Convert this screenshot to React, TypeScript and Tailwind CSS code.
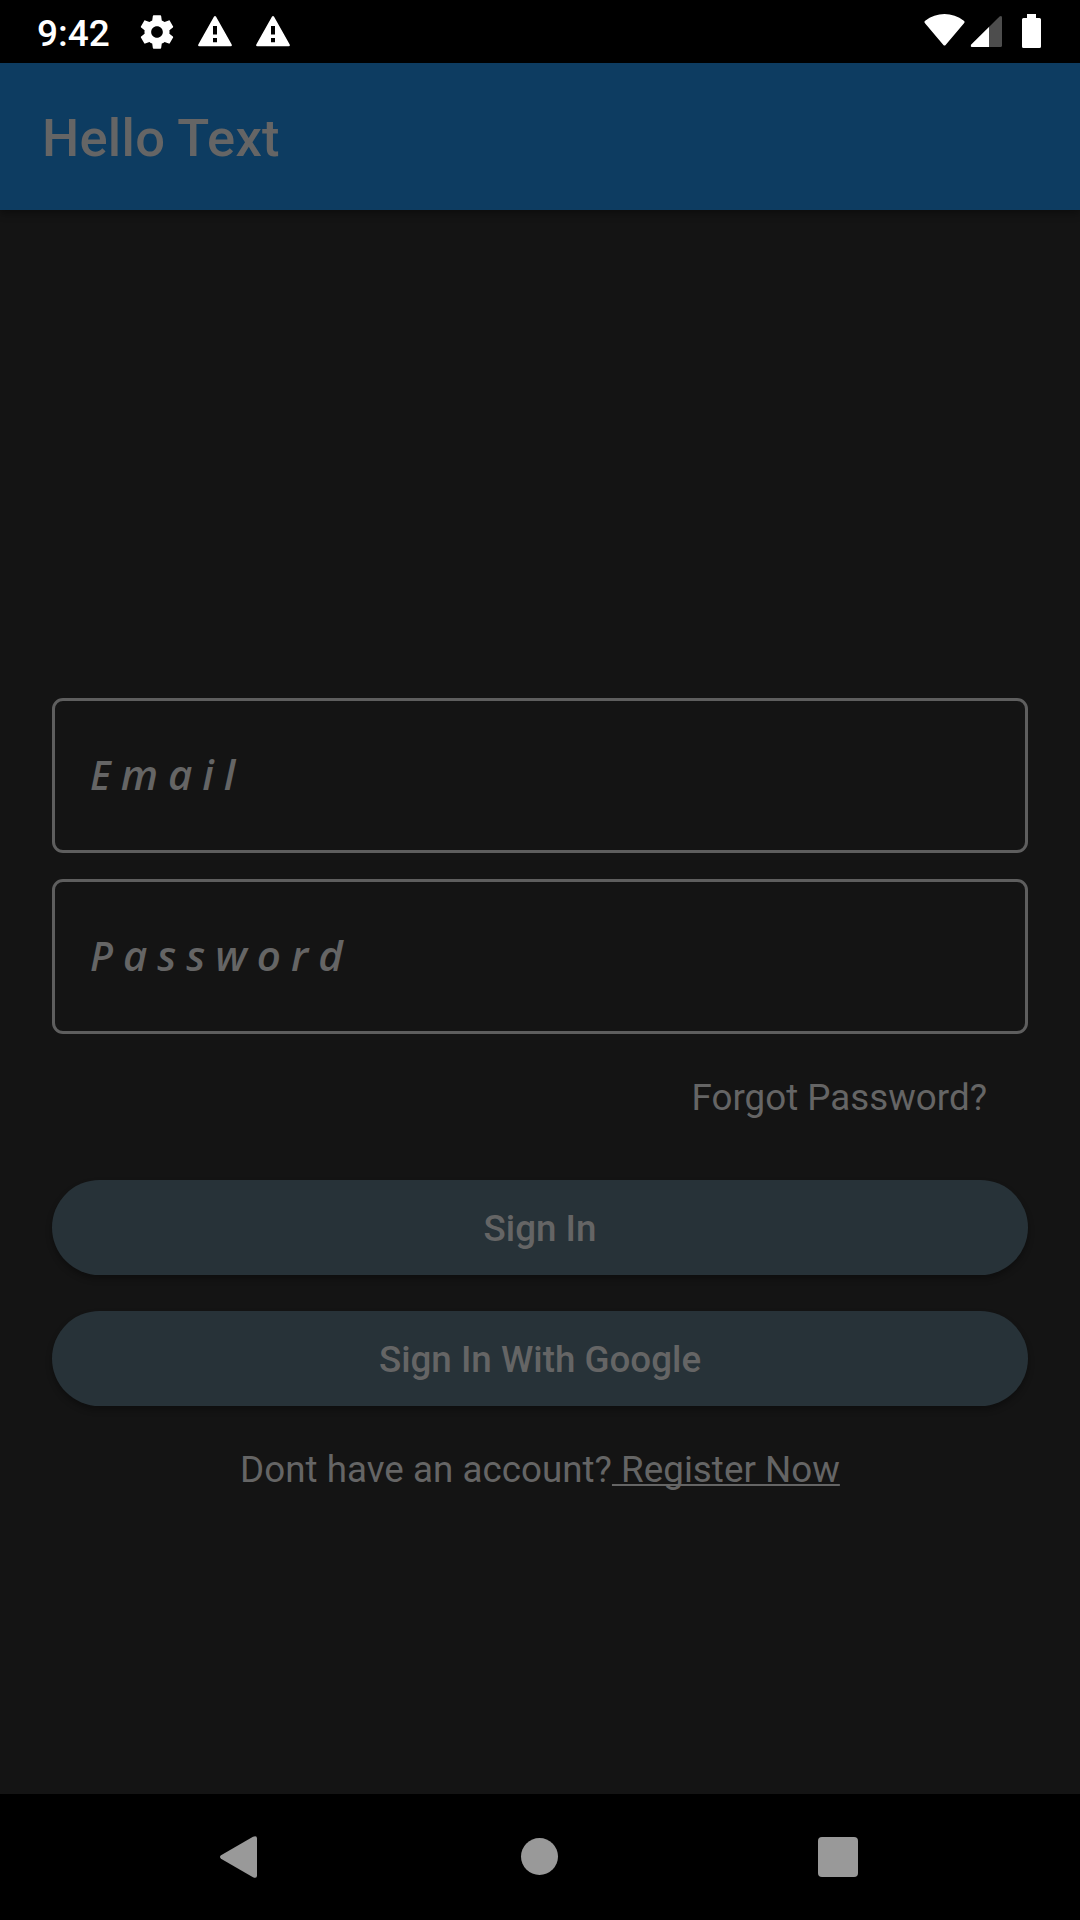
import React from "react";

function StatusBar() {
  return (
    <div className="flex h-[63px] w-full shrink-0 items-start justify-between bg-black text-white">
      <div className="flex h-full items-start">
        <span className="ml-[37px] mt-[12px] w-[100px] whitespace-nowrap text-[37px] font-medium leading-[43px]">9:42</span>
        <svg className="mt-[12px] size-[40px]" viewBox="0 0 24 24" fill="currentColor">
          <path d="M19.43 12.98c.04-.32.07-.64.07-.98s-.03-.66-.07-.98l2.11-1.65c.19-.15.24-.42.12-.64l-2-3.46c-.12-.22-.39-.3-.61-.22l-2.49 1c-.52-.4-1.08-.73-1.69-.98l-.38-2.65C14.46 2.18 14.25 2 14 2h-4c-.25 0-.46.18-.49.42l-.38 2.65c-.61.25-1.17.59-1.69.98l-2.49-1c-.23-.09-.49 0-.61.22l-2 3.46c-.13.22-.07.49.12.64l2.11 1.65c-.04.32-.07.65-.07.98s.03.66.07.98l-2.11 1.65c-.19.15-.24.42-.12.64l2 3.46c.12.22.39.3.61.22l2.49-1c.52.4 1.08.73 1.69.98l.38 2.65c.03.24.24.42.49.42h4c.25 0 .46-.18.49-.42l.38-2.65c.61-.25 1.17-.59 1.69-.98l2.49 1c.23.09.49 0 .61-.22l2-3.46c.12-.22.07-.49-.12-.64l-2.11-1.65zM12 15.5c-1.93 0-3.5-1.57-3.5-3.5s1.57-3.5 3.5-3.5 3.5 1.57 3.5 3.5-1.57 3.5-3.5 3.5z" />
        </svg>
        <Warning className="ml-[20px] mt-[15px] h-[32px] w-[36px]" />
        <Warning className="ml-[22px] mt-[15px] h-[32px] w-[36px]" />
      </div>
      <svg className="mr-[36px] mt-[12px] h-[38px] w-[120px]" viewBox="0 0 120 38">
        <path d="M1.200 11.500Q-.3 9.800 1.200 8.700C12.500-.1 28.500-.1 39.800 8.700Q41.300 9.800 39.800 11.500L21.600 33Q20.500 34.200 19.400 33Z" fill="#fff" />
        <path d="M47.300 32.600 75.300 4.700Q78 2.700 78 5.700V33.500Q78 35 76.500 35H48Q46 35 47.300 32.600Z" fill="#4d4d4d" />
        <path d="M47.300 32.600 65 15V35H48Q46 35 47.300 32.600Z" fill="#fff" />
        <path d="M103 2h9v4h3.500q1.500 0 1.500 1.500v27q0 1.500-1.500 1.500h-16q-1.500 0-1.500-1.500v-27q0-1.500 1.500-1.500h3.500Z" fill="#fff" />
      </svg>
    </div>
  );
}

function Warning({ className }: { className: string }) {
  return (
    <svg className={className} viewBox="0 0 36 32">
      <path fillRule="evenodd" fill="#fff" d="M16.900 1.800Q18 .2 19.100 1.800L34.700 29.400Q35.500 31.200 33.500 31.300H2.500Q.5 31.200 1.300 29.400ZM16 11v8.500h4V11ZM16 23v4.200h4V23Z" />
    </svg>
  );
}

function Field({ label }: { label: string }) {
  return (
    <div className="flex h-[155px] w-full items-center rounded-[11px] border-[3px] border-[#5e5e5e] pb-[3px] pl-[35px] text-[#656565]">
      <span className="whitespace-nowrap font-['Open_Sans','Noto_Sans',sans-serif] text-[42px] font-semibold italic leading-none tracking-[10px]">
        <span className="text-[39px]">{label[0]}</span>
        {label.slice(1)}
      </span>
    </div>
  );
}

function PillButton({ children }: { children: React.ReactNode }) {
  return (
    <button className="flex h-[94.5px] w-full items-center justify-center rounded-full bg-[#273238] pt-[2px] text-[36.75px] font-medium text-[#656565] shadow-[0_4px_6px_rgba(0,0,0,0.3)]">
      {children}
    </button>
  );
}

export default function App() {
  return (
    <div className="flex h-[1920px] w-[1080px] flex-col overflow-hidden bg-[#141414] font-[Roboto,sans-serif] text-[#656565]">
      <StatusBar />
      <header className="flex h-[147px] shrink-0 items-center bg-[#0d3c61] pl-[42px] pt-[2px] shadow-[0_3px_8px_rgba(0,0,0,0.4)]">
        <h1 className="text-[52.5px] font-medium leading-[62px] tracking-[0.25px]">Hello Text</h1>
      </header>
      <main className="flex flex-1 flex-col px-[52px] pt-[488px]">
        <Field label="Email" />
        <div className="h-[26px]" />
        <Field label="Password" />
        <a className="mr-[41px] mt-[42px] self-end text-[36.75px] leading-[43px]">Forgot Password?</a>
        <div className="mt-[61px] flex flex-col gap-[36.75px]">
          <PillButton>Sign In</PillButton>
          <PillButton>Sign In With Google</PillButton>
        </div>
        <p className="mt-[42px] whitespace-pre text-center text-[36.75px] leading-[43px] tracking-[0.02px]">
          Dont have an account?<span className="underline decoration-[2px] underline-offset-[2px] [text-decoration-skip-ink:none]"> Register Now</span>
        </p>
      </main>
      <nav className="flex h-[126px] shrink-0 items-start bg-black pl-[219px]">
        <svg className="mt-[41px] h-[44px] w-[39px]" viewBox="0 0 39 44">
          <path d="M2 20.300 34 1.700Q38 0 38 3.500V40.500Q38 44 34 42.300L2 23.700Q0 22 2 20.300Z" fill="#999" />
        </svg>
        <div className="ml-[263px] mt-[44px] size-[37px] rounded-full bg-[#999]" />
        <div className="ml-[260px] mt-[43px] size-[40px] rounded-[4px] bg-[#999]" />
      </nav>
    </div>
  );
}
